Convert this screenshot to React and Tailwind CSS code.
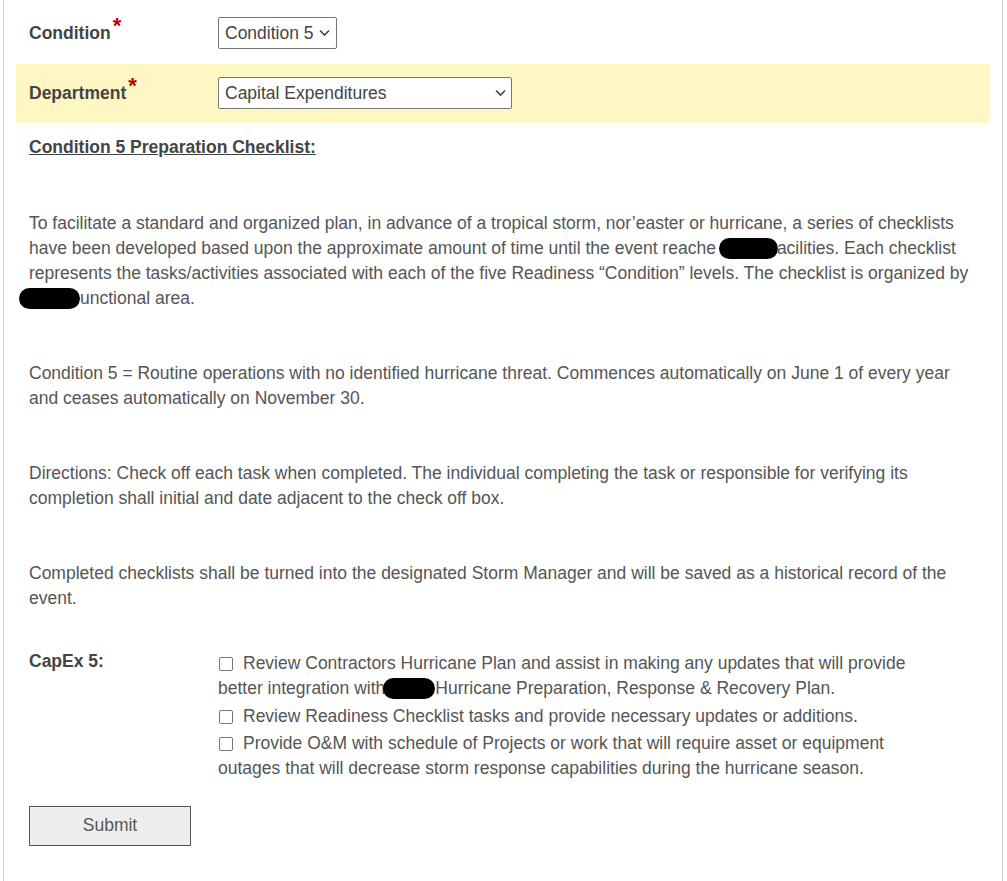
import React from "react";

function Select({ width, value, chevRight }) {
  return (
    <div className="relative inline-block" style={{ width }}>
      <select
        className="appearance-none w-full h-8 border border-[#767676] rounded-[2px] bg-white pl-[6px] pr-5 text-[17.5px] text-[#444] outline-none"
        defaultValue={value}
      >
        <option>{value}</option>
      </select>
      <svg
        width="11"
        height="7"
        viewBox="0 0 11 7"
        className="pointer-events-none absolute top-1/2 -translate-y-1/2"
        style={{ right: chevRight }}
        fill="none"
        stroke="#444"
        strokeWidth="1.6"
      >
        <path d="M1 1l4.5 4.5L10 1" />
      </svg>
    </div>
  );
}

function Star() {
  return (
    <span className="relative -top-[6px] ml-[2px] text-[22px] leading-none text-[#c00000]">*</span>
  );
}

function Blob({ w, className = "" }) {
  return (
    <span
      className={"inline-block h-[21px] bg-black rounded-full align-[-5px] " + className}
      style={{ width: w }}
    />
  );
}

function Item({ children }) {
  return (
    <div className="leading-[25px] mb-[2.5px]">
      <input
        type="checkbox"
        className="appearance-none inline-block w-[14px] h-[14px] border border-[#767676] rounded-[2px] bg-white align-[-2px] ml-px mr-[10px]"
      />
      {children}
    </div>
  );
}

export default function App() {
  return (
    <div className="font-['Liberation_Sans',Arial,sans-serif] text-[17.5px] text-[#555] bg-white min-h-[881px]">
      <div className="ml-[3px] w-[1000px] min-h-[881px] border-x border-[#cfcfcf] px-3">
        {/* Condition row */}
        <div className="flex items-center px-[13px] pt-[17px] pb-[15px]">
          <div className="w-[189px] font-bold text-[#444]">
            Condition
            <Star />
          </div>
          <Select width={119} value="Condition 5" chevRight={7} />
        </div>

        {/* Department row */}
        <div className="flex items-center bg-[#fef7c3] px-[13px] pt-[13px] pb-[14px]">
          <div className="w-[189px] font-bold text-[#444]">
            Department
            <Star />
          </div>
          <Select width={294} value="Capital Expenditures" chevRight={6} />
        </div>

        <div className="px-[13px] w-[973px] leading-[25px]">
          <div className="mt-3 font-bold underline text-[#444]">Condition 5 Preparation Checklist:</div>

          <p className="mt-[51px]">
            To facilitate a standard and organized plan, in advance of a tropical storm, nor&rsquo;easter or hurricane, a
            series of checklists have been developed based upon the approximate amount of time until the event reache
            <Blob w={59} className="ml-[3px] -mr-[1px]" />
            acilities. Each checklist represents the tasks/activities associated with each of the five Readiness
            &ldquo;Condition&rdquo; levels. The checklist is organized by <Blob w={61} className="-ml-[10px]" />
            unctional area.
          </p>

          <p className="mt-[50px]">
            Condition 5 = Routine operations with no identified hurricane threat. Commences automatically on June 1 of
            every year and ceases automatically on November 30.
          </p>

          <p className="mt-[50px]">
            Directions: Check off each task when completed. The individual completing the task or responsible for
            verifying its completion shall initial and date adjacent to the check off box.
          </p>

          <p className="mt-[50px]">
            Completed checklists shall be turned into the designated Storm Manager and will be saved as a historical
            record of the event.
          </p>

          <div className="flex mt-[40px]">
            <div className="w-[189px] font-bold text-[#444] leading-5">CapEx 5:</div>
            <div className="w-[715px]">
              <Item>
                Review Contractors Hurricane Plan and assist in making any updates that will provide better integration
                with
                <Blob w={52} className="-ml-[2px]" />
                Hurricane Preparation, Response &amp; Recovery Plan.
              </Item>
              <Item>Review Readiness Checklist tasks and provide necessary updates or additions.</Item>
              <Item>
                Provide O&amp;M with schedule of Projects or work that will require asset or equipment outages that will
                decrease storm response capabilities during the hurricane season.
              </Item>
            </div>
          </div>

          <button className="mt-[22px] w-[162px] h-[40px] border border-[#555] bg-[#eeeeee] text-[#555] text-[17.5px]">
            Submit
          </button>
        </div>
      </div>
    </div>
  );
}
